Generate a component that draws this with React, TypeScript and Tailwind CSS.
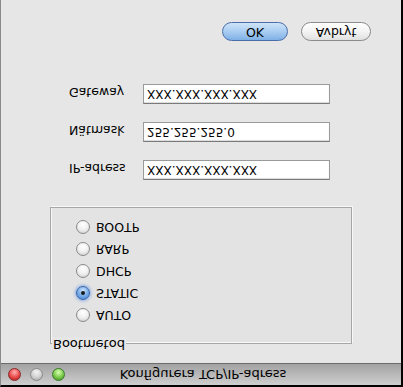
import React from "react";

const font = { fontFamily: '"Lucida Grande", "DejaVu Sans", sans-serif' };

function Radio({ label, checked }: { label: string; checked?: boolean }) {
  return (
    <div className="flex items-center h-[22px]">
      {checked ? (
        <div className="w-[14px] h-[14px] rounded-full border border-[#3b62a8] bg-[radial-gradient(circle_at_50%_70%,#cfe6ff_0%,#7fb2ea_45%,#3d7fd6_100%)] shadow-[0_0_3px_1px_rgba(80,140,230,0.6)] flex items-center justify-center">
          <div className="w-[4px] h-[4px] rounded-full bg-[#1a1a1a]" />
        </div>
      ) : (
        <div className="w-[14px] h-[14px] rounded-full border border-[#8a8a8a] bg-[radial-gradient(circle_at_50%_70%,#ffffff_0%,#f0f0f0_50%,#c8c8c8_100%)]" />
      )}
      <span className="ml-[6px] text-[12.5px] text-black">{label}</span>
    </div>
  );
}

function Field({ label, value }: { label: string; value: string }) {
  return (
    <div className="flex items-start h-[20px]">
      <div className="w-[74px] mt-[4px] h-[16px] leading-[16px] text-[12.5px] text-black">{label}</div>
      <div className="w-[187px] h-[20px] bg-white border border-[#9a9a9a] border-t-[#7a7a7a] shadow-[inset_0_1px_1px_rgba(0,0,0,0.15)] flex items-center pl-[3px] text-[12px] text-black">
        {value}
      </div>
    </div>
  );
}

export default function App() {
  return (
    <div
      className="w-[403px] h-[387px] overflow-hidden [transform:scaleY(-1)] flex flex-col bg-[#e6e6e6] border-t-2 border-t-black border-r-2 border-r-black border-l border-l-[#8a8a8a]"
      style={font}
    >
      {/* title bar */}
      <div className="h-[22px] shrink-0 flex items-center relative bg-[linear-gradient(#cfcfcf,#a2a2a2)] border-b border-b-[#6c6c6c]">
        <div className="flex items-center gap-[9px] pl-[7px]">
          <div className="w-[13px] h-[13px] rounded-full border border-[#8a2a2a] bg-[radial-gradient(circle_at_50%_70%,#ffb0b0_0%,#e84848_55%,#a01818_100%)]" />
          <div className="w-[13px] h-[13px] rounded-full border border-[#8a8a8a] bg-[radial-gradient(circle_at_50%_70%,#f4f4f4_0%,#cfcfcf_55%,#a0a0a0_100%)]" />
          <div className="w-[13px] h-[13px] rounded-full border border-[#3a7a2a] bg-[radial-gradient(circle_at_50%_70%,#d8ffb0_0%,#78c848_55%,#3a8a20_100%)]" />
        </div>
        <div className="absolute left-0 right-0 top-0 bottom-0 flex items-center justify-center text-[13px] text-black pl-[4px]">
          Konfigurera TCP/IP-adress
        </div>
      </div>

      {/* body */}
      <div className="flex flex-col pl-[49px]">
        {/* group box */}
        <div className="relative mt-[19px] w-[302px] h-[137px] border border-[#a6a6a6] shadow-[inset_1px_1px_0_#f8f8f8,1px_1px_0_#f8f8f8] bg-[#e3e3e3]">
          <div className="absolute left-[1px] top-[-8px] px-[1px] bg-[#e6e6e6] text-[13px] leading-[14px] text-black">
            Bootmetod
          </div>
          <div className="flex flex-col pl-[25px] pt-[17px]">
            <Radio label="AUTO" />
            <Radio label="STATIC" checked />
            <Radio label="DHCP" />
            <Radio label="RARP" />
            <Radio label="BOOTP" />
          </div>
        </div>

        {/* fields */}
        <div className="flex flex-col ml-[19px] mt-[27px] gap-[18px]">
          <Field label="IP-adress" value="XXX.XXX.XXX.XXX" />
          <Field label="Nätmask" value="255.255.255.0" />
          <Field label="Gateway" value="XXX.XXX.XXX.XXX" />
        </div>

        {/* buttons */}
        <div className="flex ml-[172px] mt-[43px] gap-[13px]">
          <div className="w-[66px] h-[19px] rounded-full border border-[#4a6ea8] bg-[linear-gradient(#7fb0e6,#a9cdf2_50%,#cfe4f8)] flex items-center justify-center text-[12.5px] text-black">
            OK
          </div>
          <div className="w-[70px] h-[19px] rounded-full border border-[#8a8a8a] bg-[linear-gradient(#e0e0e0,#f4f4f4_50%,#ffffff)] flex items-center justify-center text-[12.5px] text-black">
            Avbryt
          </div>
        </div>
      </div>
    </div>
  );
}
